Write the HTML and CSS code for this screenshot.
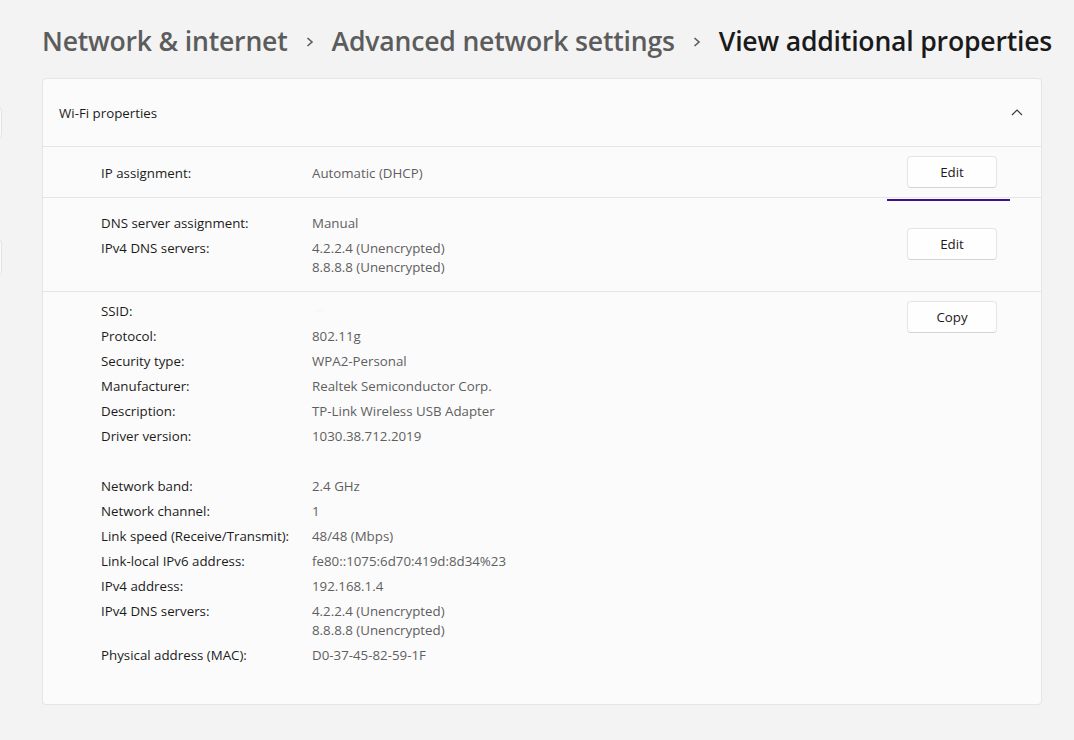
FILE: index.html
```html
<!DOCTYPE html>
<html lang="en">
<head>
<meta charset="utf-8">
<title>View additional properties</title>
<link rel="stylesheet" href="styles.css">
</head>
<body>
<div class="nav-edge nav-edge-1"></div>
<div class="nav-edge nav-edge-2"></div>
<main class="page">
  <h1 class="crumbs">
    <span class="crumb">Network &amp; internet</span>
    <svg class="sep" width="8" height="10" viewBox="0 0 8 10"><path d="M1.5 1 L6 5 L1.5 9" fill="none" stroke="#5c5c5c" stroke-width="1.6"/></svg>
    <span class="crumb">Advanced network settings</span>
    <svg class="sep" width="8" height="10" viewBox="0 0 8 10"><path d="M1.5 1 L6 5 L1.5 9" fill="none" stroke="#5c5c5c" stroke-width="1.6"/></svg>
    <span class="crumb current">View additional properties</span>
  </h1>

  <section class="card">
    <div class="card-head">
      <span class="card-title">Wi-Fi properties</span>
      <svg class="chev" width="12" height="7" viewBox="0 0 12 7"><path d="M1 6 L6 1 L11 6" fill="none" stroke="#3a3a3a" stroke-width="1.1"/></svg>
    </div>

    <div class="sec sec-ip">
      <div class="rows">
        <div class="row"><span class="lbl">IP assignment:</span><span class="val">Automatic (DHCP)</span></div>
      </div>
      <button class="btn">Edit</button>
    </div>

    <div class="sec sec-dns">
      <div class="focus-line"></div>
      <div class="rows">
        <div class="row"><span class="lbl">DNS server assignment:</span><span class="val">Manual</span></div>
        <div class="row"><span class="lbl">IPv4 DNS servers:</span><span class="val">4.2.2.4 (Unencrypted)<br>8.8.8.8 (Unencrypted)</span></div>
      </div>
      <button class="btn">Edit</button>
    </div>

    <div class="sec sec-info">
      <div class="rows">
        <div class="row"><span class="lbl">SSID:</span><span class="val"><span class="hidden-ssid">··</span></span></div>
        <div class="row"><span class="lbl">Protocol:</span><span class="val">802.11g</span></div>
        <div class="row"><span class="lbl">Security type:</span><span class="val">WPA2-Personal</span></div>
        <div class="row"><span class="lbl">Manufacturer:</span><span class="val">Realtek Semiconductor Corp.</span></div>
        <div class="row"><span class="lbl">Description:</span><span class="val">TP-Link Wireless USB Adapter</span></div>
        <div class="row"><span class="lbl">Driver version:</span><span class="val">1030.38.712.2019</span></div>
        <div class="row blank"></div>
        <div class="row"><span class="lbl">Network band:</span><span class="val">2.4 GHz</span></div>
        <div class="row"><span class="lbl">Network channel:</span><span class="val">1</span></div>
        <div class="row"><span class="lbl">Link speed (Receive/Transmit):</span><span class="val">48/48 (Mbps)</span></div>
        <div class="row"><span class="lbl">Link-local IPv6 address:</span><span class="val">fe80::1075:6d70:419d:8d34%23</span></div>
        <div class="row"><span class="lbl">IPv4 address:</span><span class="val">192.168.1.4</span></div>
        <div class="row"><span class="lbl">IPv4 DNS servers:</span><span class="val">4.2.2.4 (Unencrypted)<br>8.8.8.8 (Unencrypted)</span></div>
        <div class="row"><span class="lbl">Physical address (MAC):</span><span class="val">D0-37-45-82-59-1F</span></div>
      </div>
      <button class="btn">Copy</button>
    </div>
  </section>
</main>
</body>
</html>
```

FILE: styles.css
```css
* { box-sizing: border-box; }

html, body {
  margin: 0;
  padding: 0;
  background: #f3f3f3;
  font-family: "Open Sans", "Noto Sans", "Liberation Sans", sans-serif;
  color: #1b1b1b;
}

body { position: relative; width: 1074px; height: 740px; overflow: hidden; }

.nav-edge {
  position: absolute;
  left: -6px;
  width: 8px;
  background: #fbfbfb;
  border: 1px solid #e3e3e3;
  border-radius: 4px;
}
.nav-edge-1 { top: 107px; height: 31px; }
.nav-edge-2 { top: 239px; height: 37px; }

.page {
  padding: 20px 0 0 42px;
  width: 1074px;
}

.crumbs {
  margin: 0;
  display: flex;
  align-items: center;
  font-size: 26.6px;
  font-weight: 600;
  line-height: 42px;
  letter-spacing: -0.2px;
  height: 42px;
  white-space: nowrap;
}
.crumb { color: #5c5c5c; }
.crumb.current { color: #1a1a1a; }
.sep { margin: 2px 18px 0 18px; flex: none; }

.card {
  margin-top: 16px;
  width: 1000px;
  height: 627px;
  background: #fbfbfb;
  border: 1px solid #e5e5e5;
  border-radius: 4px;
  display: flex;
  flex-direction: column;
}

.card-head {
  height: 68px;
  border-bottom: 1px solid #e5e5e5;
  display: flex;
  align-items: center;
  justify-content: space-between;
  padding: 0 18px 0 16px;
}
.card-title { font-size: 13.3px; color: #1b1b1b; }
.chev { margin-top: -1px; }

.sec {
  position: relative;
  display: flex;
  align-items: center;
  justify-content: space-between;
  padding: 0 44px 0 58px;
  font-size: 13.3px;
}
.sec-ip { height: 51px; border-bottom: 1px solid #e5e5e5; }
.sec-dns { height: 94px; border-bottom: 1px solid #e5e5e5; }
.sec-ip .rows, .sec-dns .rows { margin-top: 2px; }
.sec-info { flex: 1; align-items: flex-start; padding-top: 10px; }

.rows { display: flex; flex-direction: column; gap: 6px; }
.row { display: flex; line-height: 19px; min-height: 19px; }
.lbl { width: 211px; color: #1b1b1b; flex: none; }
.val { color: #5f5f5f; }

.hidden-ssid { color: #ececec; filter: blur(1px); padding-left: 4px; }

.btn {
  width: 90px;
  height: 32px;
  background: #fefefe;
  border: 1px solid #e5e5e5;
  border-bottom-color: #d4d4d4;
  border-radius: 4px;
  font-family: inherit;
  font-size: 13.3px;
  color: #1b1b1b;
  padding: 0;
  margin-top: -1px;
}

.focus-line {
  position: absolute;
  top: 1px;
  left: 844px;
  width: 123px;
  height: 2px;
  background: #3b1190;
}
```
